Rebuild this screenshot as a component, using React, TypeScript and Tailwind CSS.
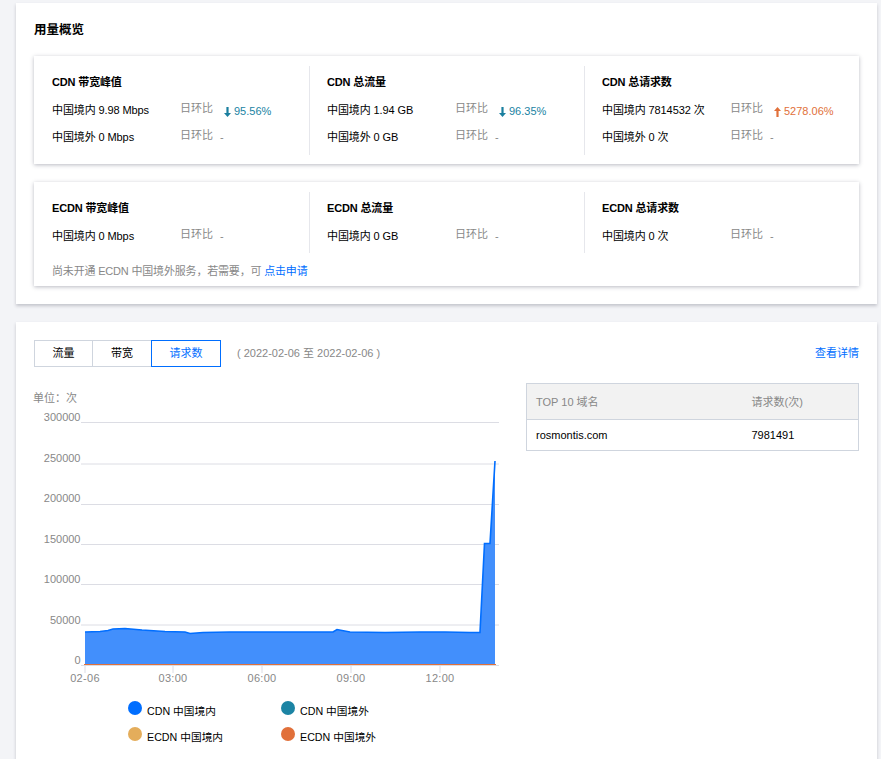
const cjk = '[font-family:"Liberation_Sans","Noto_Sans_CJK_SC",sans-serif]';

type Row = { label: string; trend?: 'up' | 'down'; change?: string };
type Stat = { title: string; rows: Row[] };

const cdnStats: Stat[] = [
  {
    title: 'CDN 带宽峰值',
    rows: [{ label: '中国境内 9.98 Mbps', trend: 'down', change: '95.56%' }, { label: '中国境外 0 Mbps' }],
  },
  {
    title: 'CDN 总流量',
    rows: [{ label: '中国境内 1.94 GB', trend: 'down', change: '96.35%' }, { label: '中国境外 0 GB' }],
  },
  {
    title: 'CDN 总请求数',
    rows: [{ label: '中国境内 7814532 次', trend: 'up', change: '5278.06%' }, { label: '中国境外 0 次' }],
  },
];

const ecdnStats: Stat[] = [
  { title: 'ECDN 带宽峰值', rows: [{ label: '中国境内 0 Mbps' }] },
  { title: 'ECDN 总流量', rows: [{ label: '中国境内 0 GB' }] },
  { title: 'ECDN 总请求数', rows: [{ label: '中国境内 0 次' }] },
];

function TrendArrow({ up }: { up: boolean }) {
  return (
    <svg width={7} height={10} viewBox="0 0 7 10" className={up ? 'fill-[#e1703a]' : 'fill-[#1a7f9f]'}>
      {up ? <path d="M3.5 0 7 4H4.6v6H2.4V4H0z" /> : <path d="M3.5 10 7 6H4.6V0H2.4v6H0z" />}
    </svg>
  );
}

function StatColumn({ stat, index }: { stat: Stat; index: number }) {
  return (
    <div
      className={
        index === 0
          ? 'w-[276px] border-r border-[#e6e7ec] pl-[18px]'
          : index === 1
            ? 'w-[275px] border-r border-[#e6e7ec] pl-[17px]'
            : 'flex-1 pl-[17px]'
      }
    >
      <div className="h-[16px] pt-[8px] text-[11px] leading-[16px] font-bold tracking-[-0.15px] text-black">
        {stat.title}
      </div>
      <div className="mt-[15px]">
        {stat.rows.map((row) => (
          <div key={row.label} className="flex h-[27px] items-center text-[11px]">
            <span className="w-[128px] tracking-[-0.1px] text-black">{row.label}</span>
            <span className="w-[33px] -translate-y-[2px] text-[#888888]">日环比</span>
            {row.change ? (
              <span
                className={
                  row.trend === 'up'
                    ? 'ml-[11px] flex translate-y-[1px] items-center text-[#e1703a]'
                    : 'ml-[11px] flex translate-y-[1px] items-center text-[#1a83a3]'
                }
              >
                <TrendArrow up={row.trend === 'up'} />
                <span className="ml-[3px]">{row.change}</span>
              </span>
            ) : (
              <span className="ml-[7px] text-[#888888]">-</span>
            )}
          </div>
        ))}
      </div>
    </div>
  );
}

const yTicks = [
  { label: '300000', y: 422.5, labelY: 421 },
  { label: '250000', y: 464, labelY: 462 },
  { label: '200000', y: 504.5, labelY: 502 },
  { label: '150000', y: 544.5, labelY: 542.5 },
  { label: '100000', y: 584.5, labelY: 582.5 },
  { label: '50000', y: 625, labelY: 623.5 },
];

const xTicks = [
  { label: '02-06', x: 85 },
  { label: '03:00', x: 173 },
  { label: '06:00', x: 262 },
  { label: '09:00', x: 351 },
  { label: '12:00', x: 440 },
];

const areaTop =
  '85,632 100,631.5 108,630.5 113,629 125,628.5 142,630 165,631.5 185,632 190,633.5 203,632.5 230,632 333,632 337,629.5 350,632 385,632.5 420,632 445,632 470,632.5 480,632.5 484.5,543.5 490,543.5 495,461';

const legend = [
  { name: 'CDN 中国境内', color: 'bg-[#006eff]' },
  { name: 'CDN 中国境外', color: 'bg-[#1c84a4]' },
  { name: 'ECDN 中国境内', color: 'bg-[#e4ad5b]' },
  { name: 'ECDN 中国境外', color: 'bg-[#e1703a]' },
];

// viewBox keeps page coordinates so the points read like the reference
function RequestChart() {
  return (
    <svg width={490} height={280} viewBox="34 410 490 280" className="block">
      {yTicks.map((t) => (
        <g key={t.label}>
          <line x1={81} x2={499} y1={t.y} y2={t.y} stroke="#dcdde4" strokeWidth={1} />
          <text x={80.5} y={t.labelY} textAnchor="end" fontSize={11} fill="#888888" fontFamily="Liberation Sans">
            {t.label}
          </text>
        </g>
      ))}
      <text x={80.5} y={664} textAnchor="end" fontSize={11} fill="#888888" fontFamily="Liberation Sans">
        0
      </text>
      <polygon points={`${areaTop} 495,665 85,665`} fill="#428ffc" />
      <polyline points={areaTop} fill="none" stroke="#006eff" strokeWidth={1.6} />
      <line x1={84} x2={496} y1={664.5} y2={664.5} stroke="#e1703a" strokeWidth={1} />
      <line x1={81} x2={499} y1={665.5} y2={665.5} stroke="#dcdde4" strokeWidth={1} />
      {xTicks.map((t) => (
        <g key={t.label}>
          <line x1={t.x} x2={t.x} y1={666} y2={673} stroke="#dcdde4" strokeWidth={1} />
          <text x={t.x} y={682} textAnchor="middle" fontSize={11} letterSpacing={0.3} fill="#888888" fontFamily="Liberation Sans">
            {t.label}
          </text>
        </g>
      ))}
    </svg>
  );
}

export default function App() {
  return (
    <div className={`h-[759px] overflow-hidden bg-[#f3f4f7] pt-[3px] pr-[4px] pl-[16px] ${cjk}`}>
      <section className="h-[301px] bg-white px-[18px] pt-[18px] shadow-[0_2px_3px_0_rgba(54,58,80,0.25)]">
        <h2 className="h-[17px] translate-y-px text-[12.5px] leading-[17px] font-bold text-black">用量概览</h2>
        <div className="mt-[18px] h-[108px] bg-white pt-[10px] shadow-[0_1px_4px_0_rgba(54,58,80,0.35)]">
          <div className="flex h-[89px]">
            {cdnStats.map((stat, i) => (
              <StatColumn key={stat.title} stat={stat} index={i} />
            ))}
          </div>
        </div>
        <div className="mt-[18px] h-[104px] bg-white pt-[10px] shadow-[0_1px_4px_0_rgba(54,58,80,0.35)]">
          <div className="flex h-[61px]">
            {ecdnStats.map((stat, i) => (
              <StatColumn key={stat.title} stat={stat} index={i} />
            ))}
          </div>
          <p className="mt-[10px] pl-[18px] text-[11px] leading-[16px] tracking-[-0.18px] text-[#888888]">
            尚未开通 ECDN 中国境外服务，若需要，可 <a className="text-[#006eff]">点击申请</a>
          </p>
        </div>
      </section>

      <section className="mt-[18px] h-[500px] bg-white px-[18px] pt-[18px] shadow-[0_2px_3px_0_rgba(54,58,80,0.25)]">
        <div className="flex h-[27px] items-center text-[11px]">
          <div className="flex h-[27px]">
            <button className="h-[27px] w-[58px] border border-r-0 border-[#cfd5de] text-black">流量</button>
            <button className="h-[27px] w-[59px] border border-r-0 border-[#cfd5de] text-black">带宽</button>
            <button className="h-[27px] w-[70px] border border-[#006eff] text-[#006eff]">请求数</button>
          </div>
          <span className="ml-[16px] text-[#888888]">( 2022-02-06 至 2022-02-06 )</span>
          <a className="ml-auto text-[#006eff]">查看详情</a>
        </div>

        <div className="mt-[16px] flex">
          <div className="w-[492px]">
            <div className="-ml-px h-[27px] pt-[8px] text-[11px] leading-[14px] text-[#888888]">单位：次</div>
            <RequestChart />
            <div className="mt-[11px] grid w-[330px] grid-cols-[153px_1fr] gap-y-[12px] pl-[94px] text-[10.7px] text-black">
              {legend.map((item) => (
                <div key={item.name} className="flex h-[14px] items-center">
                  <span className={`h-[14px] w-[14px] rounded-full ${item.color}`} />
                  <span className="ml-[5px] translate-y-[3px] whitespace-nowrap">{item.name}</span>
                </div>
              ))}
            </div>
          </div>
          <table className="h-[67px] w-[333px] border-collapse text-left text-[11px]">
            <thead>
              <tr className="h-[36px] bg-[#f2f2f2] text-[#888888]">
                <th className="border border-r-0 border-[#cfd5de] pt-[1px] pl-[9px] font-normal">TOP 10 域名</th>
                <th className="w-[107px] border border-l-0 border-[#cfd5de] pt-[1px] font-normal">请求数(次)</th>
              </tr>
            </thead>
            <tbody>
              <tr className="h-[31px] text-black">
                <td className="border border-r-0 border-[#cfd5de] pl-[9px]">rosmontis.com</td>
                <td className="border border-l-0 border-[#cfd5de]">7981491</td>
              </tr>
            </tbody>
          </table>
        </div>
      </section>
    </div>
  );
}
